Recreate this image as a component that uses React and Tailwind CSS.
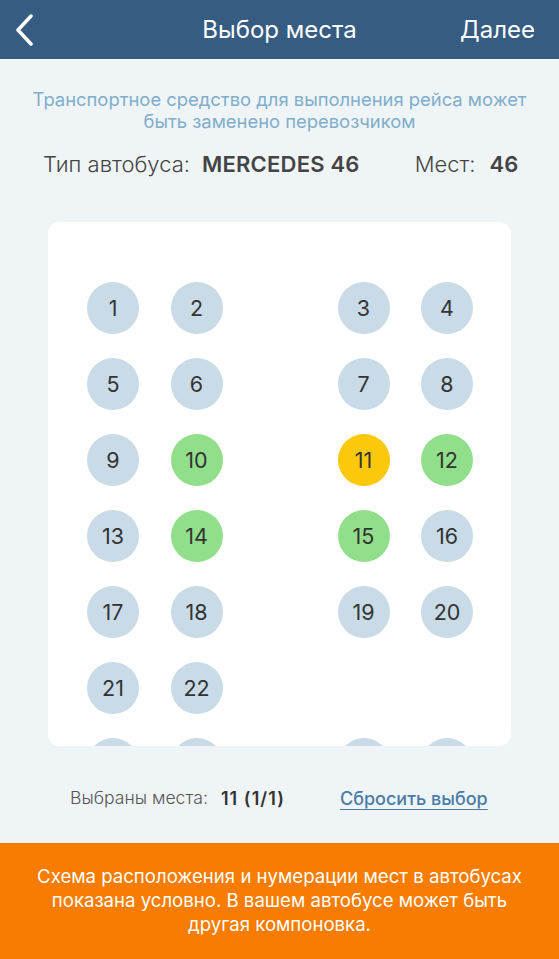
const rows = [
  [1, 2, 3, 4],
  [5, 6, 7, 8],
  [9, 10, 11, 12],
  [13, 14, 15, 16],
  [17, 18, 19, 20],
  [21, 22, null, null],
  [23, 24, 25, 26],
];

const taken = [10, 12, 14, 15];
const selected = [11];

// the last row is scrolled below the card's edge, only the tops of its circles show
function Seat({ n, hidden }) {
  if (n === null) return <div className="w-[52px] h-[52px]" />;
  let color = 'bg-[#c8dbe7]';
  if (taken.includes(n)) color = 'bg-[#91df8b]';
  if (selected.includes(n)) color = 'bg-[#fcc80c]';
  return (
    <div className={`w-[52px] h-[52px] rounded-full flex items-center justify-center text-[21.5px] text-[#333] ${color}`}>
      {hidden ? '' : n}
    </div>
  );
}

export default function App() {
  return (
    <div className="w-[559px] h-[959px] flex flex-col bg-[#eff4f7] overflow-hidden" style={{ fontFamily: 'Inter, "Noto Sans", sans-serif' }}>
      <div className="h-[59px] bg-[#365c81] grid grid-cols-[1fr_auto_1fr] items-center px-3 text-white shrink-0">
        <svg width="22" height="32" viewBox="0 0 22 32" className="ml-[1px]">
          <path d="M18 2 L5 16 L18 30" fill="none" stroke="white" strokeWidth="3.5" strokeLinecap="round" strokeLinejoin="round" />
        </svg>
        <div className="text-[24px]">Выбор места</div>
        <div className="text-[24px] mr-[12px] justify-self-end">Далее</div>
      </div>

      <div className="text-center text-[#80aecb] text-[18.4px] leading-[22px] mt-[29px] px-2">
        Транспортное средство для выполнения рейса может<br />быть заменено перевозчиком
      </div>

      <div className="flex items-center text-[22px] text-[#444] mt-[16px] pl-[43px]">
        <span className="font-light">Тип автобуса:</span>
        <span className="font-semibold ml-[12px] tracking-[0.01em]">MERCEDES 46</span>
        <span className="font-light ml-[55px]">Мест:</span>
        <span className="font-semibold ml-[14px]">46</span>
      </div>

      <div className="mx-[48px] mt-[41px] h-[524px] bg-white rounded-[12px] overflow-hidden shrink-0">
        <div className="pt-[60px] pl-[39px] flex flex-col gap-[24px]">
          {rows.map((r, i) => (
            <div key={i} className="grid grid-cols-[83.5px_83.5px_83.5px_83.5px_52px] items-center">
              <Seat n={r[0]} hidden={i === 6} />
              <Seat n={r[1]} hidden={i === 6} />
              <div />
              <Seat n={r[2]} hidden={i === 6} />
              <Seat n={r[3]} hidden={i === 6} />
            </div>
          ))}
        </div>
      </div>

      <div className="flex items-center mt-[40px] h-[24px] text-[17.6px]">
        <span className="ml-[70px] text-[#555] font-light">Выбраны места:</span>
        <span className="ml-[13px] text-[#333] font-semibold text-[18px] tracking-[0.06em]">11 (1/1)</span>
        <span className="ml-[55px] text-[#4a7ca5] font-medium underline underline-offset-4 text-[18px]">Сбросить выбор</span>
      </div>

      <div className="mt-auto h-[116px] bg-[#f77c00] text-white text-center text-[18.6px] leading-[24px] pt-[21px] px-2">
        Схема расположения и нумерации мест в автобусах<br />показана условно. В вашем автобусе может быть<br />другая компоновка.
      </div>
    </div>
  );
}
